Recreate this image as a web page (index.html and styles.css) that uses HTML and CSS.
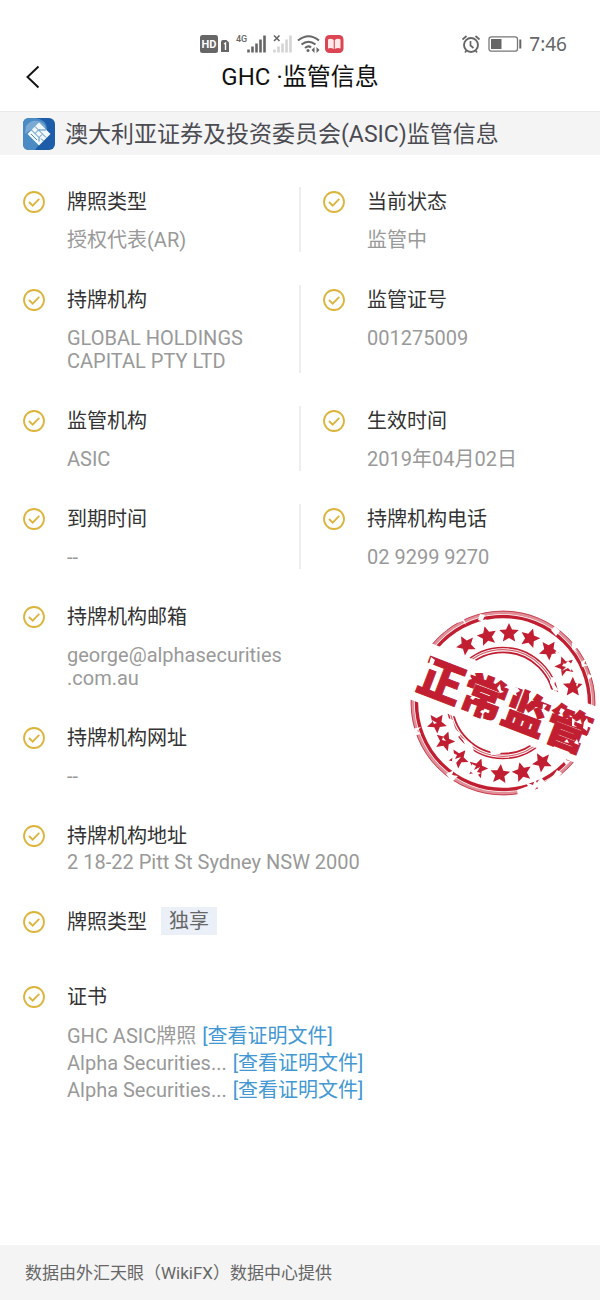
FILE: index.html
```html
<!DOCTYPE html>
<html lang="zh-CN">
<head>
<meta charset="utf-8">
<meta name="viewport" content="width=device-width, initial-scale=1">
<title>GHC ·监管信息</title>
<link rel="stylesheet" href="styles.css">
</head>
<body>
<svg class="defs" aria-hidden="true">
  <symbol id="check" viewBox="0 0 22 22"><circle cx="11" cy="11" r="10" fill="none" stroke="#dcb43c" stroke-width="1.8"/><path d="M6 11l3.7 3.7 6.6-6.9" fill="none" stroke="#dcb43c" stroke-width="1.8"/></symbol>
  <symbol id="star" viewBox="-10 -10 20 20"><path d="M0-10L3-3.6 9.8-3 4.6 1.8 6.2 8.6 0 5-6.2 8.6-4.6 1.8-9.8-3-3-3.6Z" fill="#c11f31"/></symbol>
</svg>
<header class="header">
  <div class="status">
    <svg class="status-left" viewBox="0 0 145 22" aria-hidden="true">
      <rect x="0" y="2" width="18" height="18" rx="2.5" fill="#666"/>
      <text x="9" y="15.2" text-anchor="middle" class="hd">HD</text>
      <path d="M21 9q0-2 2-2h3.5L29 9.500V19h-8z" fill="#666"/>
      <path d="M24 11l1.500-1v7" fill="none" stroke="#fff" stroke-width="1.400"/>
      <text x="36" y="9" class="net">4G</text>
      <path d="M48.500 19.500v-3M52.500 19.500v-6M56.500 19.500v-9M60.500 19.500v-13M64.500 19.500v-17" stroke="#666" stroke-width="2.600"/>
      <path d="M74 2.500l5.500 5.500M79.500 2.500L74 8" stroke="#666" stroke-width="1.600"/>
      <path d="M74.500 19.500v-3M78.500 19.500v-6M82.500 19.500v-9M86.500 19.500v-13M90.500 19.500v-17" stroke="#d4d4d4" stroke-width="2.600"/>
      <path d="M98 7.500q10.500-8.500 21 0M101.500 11.500q7-5.500 14 0M105 15q3.500-3 6 -.5" fill="none" stroke="#666" stroke-width="2"/>
      <circle cx="108" cy="17.500" r="1.500" fill="#666"/>
      <path d="M114.500 14v6l-3-3zM116.500 14v6l3-3z" fill="#666"/>
      <rect x="125" y="2" width="18.500" height="18" rx="4.500" fill="#dc4654"/>
      <path d="M128 6.500q3-1.500 5.700.5v9q-2.700-1.500-5.700-.5zM134.800 7q3-2 5.700-.5v9q-3-1-5.700.5z" fill="#fde9e9"/>
    </svg>
    <div class="status-right">
      <svg class="alarm" viewBox="0 0 20 20" aria-hidden="true"><circle cx="10" cy="11" r="7" fill="none" stroke="#666" stroke-width="1.900"/><path d="M9.500 7v4.500l3 2.500M1.500 5.500l4-3.500M18.500 5.500l-4-3.500M5.500 16.500L4 18.500M14.500 16.500l1.500 2" fill="none" stroke="#666" stroke-width="1.700"/></svg>
      <svg class="battery" viewBox="0 0 34 18" aria-hidden="true"><rect x="1" y="1.800" width="28.500" height="14.400" rx="2.500" fill="none" stroke="#777" stroke-width="1.300"/><rect x="3" y="4" width="10.500" height="10" fill="#666"/><path d="M32.300 4.500v9" stroke="#666" stroke-width="2"/></svg>
      <span class="clock">7:46</span>
    </div>
  </div>
  <div class="nav">
    <button class="back" type="button" aria-label="返回"><svg viewBox="0 0 14 24" aria-hidden="true"><path d="M12.500 1.500L1.500 12l11 10.500" fill="none" stroke="#111" stroke-width="1.900"/></svg></button>
    <h1 class="title">GHC ·监管信息</h1>
  </div>
</header>
<main class="main">
  <div class="regulator">
    <svg class="logo" viewBox="0 0 32 32" aria-hidden="true">
      <rect width="32" height="32" rx="6" fill="#1c5ca8"/>
      <path d="M6 0h7q11 2 11 11c0 8-7 14-12 21H6q-6 0-6-6V6q0-6 6-6z" fill="#4b8bc4"/>
      <path d="M3 8Q9 0 18 4q6 3 4 9Q14 5 2 16z" fill="#8fb8dc" opacity=".7"/>
      <path d="M16 4.500L27.500 16 16 27.500 4.500 16z" fill="#f2f7fb"/>
      <path d="M12 8.500l11 11M8.500 12l7.500 7.500 3-3M18 20.500l2.500 2.500M16 19.500v4M12 15.500l4-4M16 12l7 0M8 16l6 6" fill="none" stroke="#4e8bc0" stroke-width="1"/>
    </svg>
    <h2 class="regulator-name">澳大利亚证券及投资委员会(ASIC)监管信息</h2>
  </div>
  <div class="fields">
    <section class="field divided"><svg class="tick"><use href="#check"/></svg><div class="info"><h3 class="label">牌照类型</h3><p class="value">授权代表(AR)</p></div></section>
    <section class="field"><svg class="tick"><use href="#check"/></svg><div class="info"><h3 class="label">当前状态</h3><p class="value">监管中</p></div></section>
    <section class="field divided"><svg class="tick"><use href="#check"/></svg><div class="info"><h3 class="label">持牌机构</h3><p class="value">GLOBAL HOLDINGS CAPITAL PTY LTD</p></div></section>
    <section class="field"><svg class="tick"><use href="#check"/></svg><div class="info"><h3 class="label">监管证号</h3><p class="value">001275009</p></div></section>
    <section class="field divided"><svg class="tick"><use href="#check"/></svg><div class="info"><h3 class="label">监管机构</h3><p class="value">ASIC</p></div></section>
    <section class="field"><svg class="tick"><use href="#check"/></svg><div class="info"><h3 class="label">生效时间</h3><p class="value">2019年04月02日</p></div></section>
    <section class="field divided"><svg class="tick"><use href="#check"/></svg><div class="info"><h3 class="label">到期时间</h3><p class="value">--</p></div></section>
    <section class="field"><svg class="tick"><use href="#check"/></svg><div class="info"><h3 class="label">持牌机构电话</h3><p class="value">02 9299 9270</p></div></section>
    <section class="field first"><svg class="tick"><use href="#check"/></svg><div class="info"><h3 class="label">持牌机构邮箱</h3><p class="value">george@alphasecurities<wbr>.com.au</p></div></section>
    <section class="field first"><svg class="tick"><use href="#check"/></svg><div class="info"><h3 class="label">持牌机构网址</h3><p class="value">--</p></div></section>
    <section class="field wide"><svg class="tick"><use href="#check"/></svg><div class="info tight"><h3 class="label">持牌机构地址</h3><p class="value">2 18-22 Pitt St Sydney NSW 2000</p></div></section>
    <section class="field wide"><svg class="tick"><use href="#check"/></svg><div class="info inline"><h3 class="label">牌照类型</h3><span class="tag">独享</span></div></section>
    <section class="field wide certificates"><svg class="tick"><use href="#check"/></svg><div class="info"><h3 class="label">证书</h3>
      <ul class="files">
        <li>GHC ASIC牌照 <a href="#file-1">[查看证明文件]</a></li>
        <li>Alpha Securities... <a href="#file-2">[查看证明文件]</a></li>
        <li>Alpha Securities... <a href="#file-3">[查看证明文件]</a></li>
      </ul></div></section>
    <svg class="stamp" viewBox="0 0 200 206" role="img" aria-label="正常监管">
      <g fill="none" stroke="#c11f31">
        <circle cx="103" cy="103" r="86.500" stroke-width="3.400"/>
        <circle cx="103" cy="103" r="90.600" stroke-width="3.400" opacity=".5"/>
        <circle cx="103" cy="103" r="91.900" stroke-width="1" opacity=".7"/>
        <circle cx="103" cy="103" r="55.500" stroke-width="1.400"/>
        <circle cx="103" cy="103" r="53.300" stroke-width="1.200" opacity=".7"/>
        <circle cx="103" cy="103" r="50.700" stroke-width="1.800"/>
      </g>
      <rect x="-5" y="73" width="216" height="60" fill="#fff" transform="rotate(21 103 103)"/>
      <g>
        <use href="#star" x="-10" y="-10" width="20" height="20" transform="translate(66 45) rotate(-30)"/>
        <use href="#star" x="-10" y="-10" width="20" height="20" transform="translate(87 36) rotate(-14)"/>
        <use href="#star" x="-10" y="-10" width="20" height="20" transform="translate(109 33)"/>
        <use href="#star" x="-10" y="-10" width="20" height="20" transform="translate(130 38) rotate(18)"/>
        <use href="#star" x="-10" y="-10" width="20" height="20" transform="translate(149 50) rotate(34)"/>
        <use href="#star" x="-10" y="-10" width="20" height="20" transform="translate(165 66) rotate(52)"/>
        <use href="#star" x="-10" y="-10" width="20" height="20" transform="translate(173 87) rotate(72)"/>
        <use href="#star" x="-10" y="-10" width="20" height="20" transform="translate(37 123) rotate(34)"/>
        <use href="#star" x="-10" y="-10" width="20" height="20" transform="translate(45 141) rotate(20)"/>
        <use href="#star" x="-10" y="-10" width="20" height="20" transform="translate(59 158) rotate(40)"/>
        <use href="#star" x="-10" y="-10" width="20" height="20" transform="translate(78 168) rotate(20)"/>
        <use href="#star" x="-10" y="-10" width="20" height="20" transform="translate(100 174) rotate(5)"/>
        <use href="#star" x="-10" y="-10" width="20" height="20" transform="translate(122 172) rotate(-15)"/>
        <use href="#star" x="-10" y="-10" width="20" height="20" transform="translate(142 162) rotate(-30)"/>
      </g>
      <text x="105" y="122" text-anchor="middle" class="stamp-text" transform="rotate(21 105 105)">正常监管</text>
      <g fill="#fff">
        <path d="M151 30l4-4 5 5-4 5zM39 28l5-4 3 6-5 3zM58 17l6 2 2 6-3-4-6 2zM80 14l5 1-2 5 4-1-3 3-6-2zM172 42l7 5-4 2 3 4-6-4zM181 62l5-3-2 5 6 1-8 2zM188 74l5 2-5 4z"/>
        <path d="M12 129l9-2-4 4 4 3-8 2zM46 174l8-4-2 5 6 1-6 6zM117 190l11-4-3-4 8 3 2-6 3 6-4 6-16 6zM136 184l5-7 4 5 8-6 4-6 5 3-5 6-10 8-8 3zM170 161l-8-2 4 6z"/>
        <path d="M48 118l5 2 2 9 6 5-5 5-7-9zM62 138l10 6 2 8-8-5zM130 65l4-1 1 5-4-1zM151 77l6 1-3 6 5 7-5-1-4-7zM90 150l7 2 6-2-3 4-9 1z"/>
        <path d="M155 52l4-2-2 5zM160 60l4 3-2 3 4 1-4 4 6-3 3 3 2-6-5-4-3 3zM176 84l3-2-2 5zM53 153l4 2-2 4 6-2-5 6-4-2zM72 164l4 2-2 4 6-3-3 5 4 1-5 3-5-4zM32 120l5 3-3 1zM43 137l3 4-4-1z"/>
        <path d="M31 57l4 3-2 5-4-1zM66 78l4-2 2 3-4 1zM72 96l4 1-3 3-3-2zM97 88l3-4 1 6 3 2-4 1zM82 110l4 1-3 3-3-2zM112 90l5-3 3 4-4 2 1 3-5-2zM129 94l3-4 2 5-3 3 3 3-5-1zM143 104l4 1-3 4 3 2-5 1zM139 130l3-4 1 5zM161 108l4 2-3 4-3-2zM172 118l3 2-1 5 3 2-5-1zM184 122l3-4 1 4 5 3-5 2-1 4-4-3zM164 142l3-3 2 4zM187 135l4 1-1 5-4-1zM174 143l3-4 2 6z"/>
      </g>
    </svg>
  </div>
</main>
<footer class="footer">数据由外汇天眼（WikiFX）数据中心提供</footer>
</body>
</html>
```

FILE: styles.css
```css
* { box-sizing: border-box; }
body {
  margin: 0;
  min-height: 100vh;
  display: flex;
  flex-direction: column;
  background: #fff;
  color: #333;
  font-family: Roboto, "Noto Sans CJK SC", sans-serif;
  font-size: 20px;
  overflow-x: hidden;
}
h1, h2, h3, p, ul { margin: 0; padding: 0; font-weight: 400; }
.defs { display: block; width: 0; height: 0; }
.header { padding: 33px 0 14px; }
.status {
  display: flex;
  justify-content: space-between;
  align-items: center;
  height: 22px;
  padding: 0 33px 0 200px;
}
.status-left { width: 145px; height: 22px; }
.hd { font: 700 11px Roboto, sans-serif; fill: #fff; }
.net { font: 500 9px Roboto, sans-serif; fill: #666; }
.status-right { display: flex; align-items: center; gap: 7px; }
.alarm { width: 20px; height: 20px; }
.battery { width: 34px; height: 18px; }
.clock { font: 19px/22px "Noto Sans", sans-serif; color: #666; }
.nav {
  display: grid;
  grid-template-columns: 60px 1fr 60px;
  align-items: center;
  height: 42px;
}
.back {
  display: flex;
  width: 60px;
  height: 42px;
  padding: 0 0 0 26px;
  border: 0;
  background: none;
  align-items: center;
}
.back svg { width: 14px; height: 24px; }
.title { font-size: 24px; line-height: 44px; text-align: center; color: #111; }
.main { flex: 1; }
.regulator {
  display: flex;
  align-items: center;
  gap: 10px;
  height: 44px;
  padding: 0 23px;
  background: #f4f4f4;
  border-top: 1px solid #e9e9e9;
}
.logo { width: 32px; height: 32px; }
.regulator-name { font-size: 23px; line-height: 32px; padding-top: 2px; color: #4b4b52; }
.fields {
  position: relative;
  display: grid;
  grid-template-columns: 1fr 1fr;
  row-gap: 33px;
  padding: 32px 0;
}
.field { display: flex; gap: 22px; padding-left: 23px; }
.divided { border-right: 2px solid #eee; margin-right: -1px; }
.first { grid-column: 1; }
.wide { grid-column: 1 / -1; }
.tick { flex: none; width: 22px; height: 22px; margin-top: 4px; }
.info { display: flex; flex-direction: column; gap: 12px; }
.tight { gap: 0; }
.inline { flex-direction: row; gap: 14px; }
.label { font-size: 20px; line-height: 30px; color: #333; }
.value { line-height: 23px; color: #999; }
.tag {
  height: 28px;
  padding: 0 8px;
  line-height: 28px;
  background: #ebeff7;
  color: #666;
}
.certificates { margin-top: 12px; }
.certificates .info { gap: 11px; }
.files { list-style: none; color: #999; line-height: 27px; }
.files a { margin-left: 1px; color: #4398d3; text-decoration: none; }
.stamp {
  position: absolute;
  top: 445px;
  right: 0;
  width: 200px;
  height: 206px;
}
.stamp-text { font: 900 45px "Noto Sans CJK SC", sans-serif; fill: #c11f31; stroke: #c11f31; stroke-width: 1px; }
.footer {
  padding: 15px 25px 13px;
  background: #f4f4f4;
  color: #666;
  font-size: 17px;
  line-height: 27px;
}
```
